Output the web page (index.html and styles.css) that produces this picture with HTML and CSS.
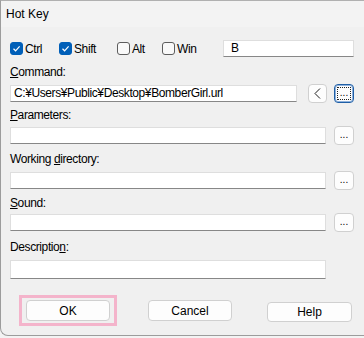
FILE: index.html
```html
<!DOCTYPE html>
<html>
<head>
<meta charset="utf-8">
<link rel="stylesheet" href="styles.css">
</head>
<body>
<div class="window">
  <div class="titlebar">Hot Key</div>
  <div class="content">
    <div class="checkrow">
      <label class="chk chk-ctrl"><span class="box on"><svg width="9" height="9" viewBox="0 0 9 9"><path d="M1.5 4.8 L3.6 6.8 L7.6 2.4" fill="none" stroke="#fff" stroke-width="1.2"/></svg></span>Ctrl</label>
      <label class="chk chk-shift"><span class="box on"><svg width="9" height="9" viewBox="0 0 9 9"><path d="M1.5 4.8 L3.6 6.8 L7.6 2.4" fill="none" stroke="#fff" stroke-width="1.2"/></svg></span>Shift</label>
      <label class="chk chk-alt"><span class="box"></span>Alt</label>
      <label class="chk chk-win"><span class="box"></span>Win</label>
      <div class="input input-key">B</div>
    </div>

    <div class="lbl lbl-command"><u>C</u>ommand:</div>
    <div class="row row-command">
      <div class="input input-cmd">C:¥Users¥Public¥Desktop¥BomberGirl.url</div>
      <div class="btn sq arrow"><svg width="7" height="11" viewBox="0 0 7 11"><path d="M6 0.5 L1 5.5 L6 10.5" fill="none" stroke="#1a1a1a" stroke-width="1"/></svg></div>
      <div class="btn sq focus"><span class="dots">...</span></div>
    </div>

    <div class="lbl lbl-params"><u>P</u>arameters:</div>
    <div class="row row-params">
      <div class="input input-wide"></div>
      <div class="btn sq">...</div>
    </div>

    <div class="lbl lbl-work">Working <u>d</u>irectory:</div>
    <div class="row row-work">
      <div class="input input-wide"></div>
      <div class="btn sq">...</div>
    </div>

    <div class="lbl lbl-sound"><u>S</u>ound:</div>
    <div class="row row-sound">
      <div class="input input-wide"></div>
      <div class="btn sq">...</div>
    </div>

    <div class="lbl lbl-desc">Descriptio<u>n</u>:</div>
    <div class="input input-wide input-desc"></div>

    <div class="buttons">
      <div class="focusring"><div class="btn big">OK</div></div>
      <div class="btn big cancel">Cancel</div>
      <div class="btn big help">Help</div>
    </div>
  </div>
</div>
</body>
</html>
```
FILE: styles.css
```css
html, body {
  margin: 0;
  padding: 0;
  background: #f3f3f3;
  overflow: hidden;
  width: 364px;
  height: 338px;
}
.window {
  width: 364px;
  height: 336px;
  box-sizing: border-box;
  border-left: 1px solid #9c9c9c;
  border-top: 1px solid #b0b0b0;
  border-bottom: 1px solid #9c9c9c;
  border-bottom-left-radius: 8px;
  background: #f0f0f0;
  font-family: "Liberation Sans", Arial, sans-serif;
  color: #000;
  overflow: hidden;
}
.titlebar {
  height: 26px;
  background: #f3f3f3;
  font-size: 12px;
  line-height: 26px;
  padding-left: 5px;
  box-sizing: border-box;
}
.content {
  padding-left: 8px;
  font-size: 12px;
  letter-spacing: -0.4px;
  display: flex;
  flex-direction: column;
  align-items: flex-start;
}
.checkrow {
  margin-top: 13px;
  height: 17px;
  display: flex;
  align-items: center;
}
.chk {
  display: flex;
  align-items: center;
  gap: 2px;
  height: 17px;
}
.chk-ctrl { margin-left: 1px; width: 49px; }
.chk-shift { width: 58px; }
.chk-alt { width: 45px; }
.chk-win { width: 61px; }
.box {
  width: 13px;
  height: 13px;
  box-sizing: border-box;
  border: 1px solid #5d5d5d;
  border-radius: 3px;
  background: #f9f9f9;
  display: flex;
  align-items: center;
  justify-content: center;
}
.box.on {
  background: #005fb8;
  border-color: #005fb8;
}
.input {
  background: #fff;
  box-sizing: border-box;
  border: 1px solid #dedede;
  border-bottom-color: #878787;
  height: 17px;
  line-height: 15px;
  padding-left: 3px;
  white-space: nowrap;
  overflow: hidden;
}
.input-key {
  width: 131px;
  padding-left: 7px;
}
.lbl {
  height: 14px;
  line-height: 14px;
  padding-left: 1px;
}
.lbl u { text-underline-offset: 1px; }
.lbl-command { margin-top: 8px; }
.lbl-params { margin-top: 5px; }
.lbl-work { margin-top: 7px; }
.lbl-sound { margin-top: 6px; }
.lbl-desc { margin-top: 8px; }
.row {
  display: flex;
  align-items: center;
  height: 19px;
}
.row-command { margin-top: 5px; }
.row-params { margin-top: 4px; }
.row-work { margin-top: 5px; }
.row-sound { margin-top: 3px; }
.input-cmd {
  width: 287px;
  margin-left: 1px;
}
.input-wide {
  width: 316px;
  margin-left: 1px;
}
.row .input-wide { margin-right: 8px; }
.input-desc {
  margin-top: 6px;
  height: 19px;
}
.btn {
  background: #fdfdfd;
  border: 1px solid #d0d0d0;
  border-radius: 4px;
  box-sizing: border-box;
  display: flex;
  align-items: center;
  justify-content: center;
  letter-spacing: 0;
}
.sq {
  width: 20px;
  height: 19px;
  font-size: 10px;
  line-height: 1;
  padding-bottom: 2px;
}
.arrow {
  width: 19px;
  margin-left: 11px;
  margin-right: 7px;
  padding-bottom: 0;
}
.focus {
  border: 1px solid #1f5fa6;
  box-shadow: inset 0 0 0 1px #8fb2dd;
  padding: 2px;
}
.dots {
  border: 1px dotted #222;
  width: 100%;
  height: 100%;
  box-sizing: border-box;
  display: flex;
  align-items: center;
  justify-content: center;
  padding-bottom: 2px;
}
.buttons {
  margin-top: 16px;
  display: flex;
  align-items: center;
}
.focusring {
  margin-left: 10px;
  border: 3px solid #f4b4cb;
  padding: 2px 4px;
}
.big {
  width: 84px;
  height: 21px;
  font-size: 12px;
}
.cancel { margin-left: 31px; }
.help {
  margin-left: 35px;
  width: 85px;
  height: 20px;
  margin-top: 3px;
}
```
